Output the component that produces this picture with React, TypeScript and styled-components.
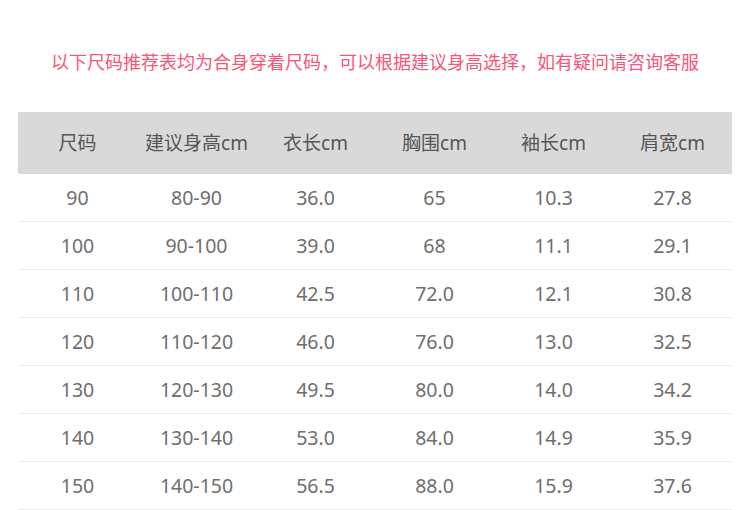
import React from 'react';
import styled, { createGlobalStyle } from 'styled-components';

const GlobalStyle = createGlobalStyle`
  html, body {
    margin: 0;
    padding: 0;
    background: #ffffff;
  }
  body {
    font-family: "Noto Sans", "Noto Sans CJK SC", sans-serif;
  }
`;

const Page = styled.div`
  width: 750px;
  height: 510px;
  overflow: hidden;
  background: #fff;
  display: flex;
  flex-direction: column;
  align-items: center;
`;

const Notice = styled.p`
  margin: 47px 0 0;
  height: 30px;
  line-height: 30px;
  font-size: 18px;
  color: #f7557c;
  text-align: center;
  white-space: nowrap;
`;

const Table = styled.table`
  margin-top: 35px;
  width: 714px;
  border-collapse: collapse;
  table-layout: fixed;
`;

const HeadCell = styled.th`
  height: 60px;
  padding: 0 0 2px;
  background: #d9d9d9;
  color: #555;
  font-size: 19px;
  font-weight: normal;
  text-align: center;
`;

const Row = styled.tr`
  border-bottom: 1px solid #ededed;
`;

const Cell = styled.td`
  height: 46px;
  padding: 0 0 1px;
  color: #6e6e6e;
  font-size: 19.5px;
  text-align: center;
`;

const columns = ['尺码', '建议身高cm', '衣长cm', '胸围cm', '袖长cm', '肩宽cm'];

const rows = [
  ['90', '80-90', '36.0', '65', '10.3', '27.8'],
  ['100', '90-100', '39.0', '68', '11.1', '29.1'],
  ['110', '100-110', '42.5', '72.0', '12.1', '30.8'],
  ['120', '110-120', '46.0', '76.0', '13.0', '32.5'],
  ['130', '120-130', '49.5', '80.0', '14.0', '34.2'],
  ['140', '130-140', '53.0', '84.0', '14.9', '35.9'],
  ['150', '140-150', '56.5', '88.0', '15.9', '37.6'],
];

export default function App() {
  return (
    <Page>
      <GlobalStyle />
      <Notice>以下尺码推荐表均为合身穿着尺码，可以根据建议身高选择，如有疑问请咨询客服</Notice>
      <Table>
        <thead>
          <tr>
            {columns.map(c => (
              <HeadCell key={c}>{c}</HeadCell>
            ))}
          </tr>
        </thead>
        <tbody>
          {rows.map(r => (
            <Row key={r[0]}>
              {r.map((v, i) => (
                <Cell key={i}>{v}</Cell>
              ))}
            </Row>
          ))}
        </tbody>
      </Table>
    </Page>
  );
}
